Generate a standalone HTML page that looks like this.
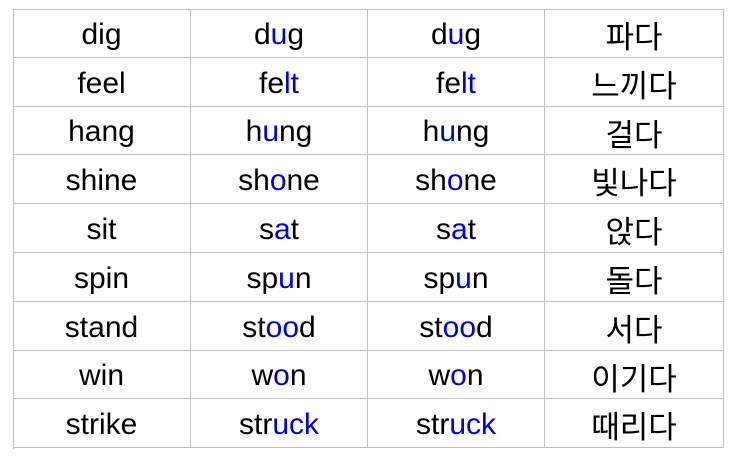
<!DOCTYPE html>
<html><head><meta charset="utf-8"><style>
body{margin:0;background:#fff;width:731px;height:462px;overflow:hidden;position:relative}
.c{position:absolute;box-sizing:border-box;border-right:1px solid #c0c0c0;border-bottom:1px solid #c0c0c0;display:flex;align-items:center;justify-content:center;font-family:"Liberation Sans","Noto Sans CJK KR",sans-serif;font-size:30px;color:#000;padding-top:3px}
.k{font-size:31px}
b{font-weight:normal;color:#0000cc}
.t{position:absolute;left:13px;top:9px;width:711px;height:440px;border-left:1px solid #c0c0c0;border-top:1px solid #c0c0c0;box-sizing:border-box}
</style></head><body>
<div class="t"></div>
<div id="g"></div>
<script>
var rows=[["dig","d<b>u</b>g","d<b>u</b>g","파다"],["feel","fe<b>lt</b>","fe<b>lt</b>","느끼다"],["hang","h<b>u</b>ng","h<b>u</b>ng","걸다"],["shine","sh<b>o</b>ne","sh<b>o</b>ne","빛나다"],["sit","s<b>a</b>t","s<b>a</b>t","앉다"],["spin","sp<b>u</b>n","sp<b>u</b>n","돌다"],["stand","st<b>oo</b>d","st<b>oo</b>d","서다"],["win","w<b>o</b>n","w<b>o</b>n","이기다"],["strike","str<b>uck</b>","str<b>uck</b>","때리다"]];
var xs=[13,191,368,545,724],h="";
for(var r=0;r<9;r++){var y0=Math.round(9+r*48.8),y1=Math.round(9+(r+1)*48.8);
for(var c=0;c<4;c++){h+='<div class="c'+(c==3?' k':'')+'" style="left:'+xs[c]+'px;top:'+y0+'px;width:'+(xs[c+1]-xs[c])+'px;height:'+(y1-y0)+'px">'+rows[r][c]+'</div>';}}
document.getElementById('g').innerHTML=h;
</script>
</body></html>
